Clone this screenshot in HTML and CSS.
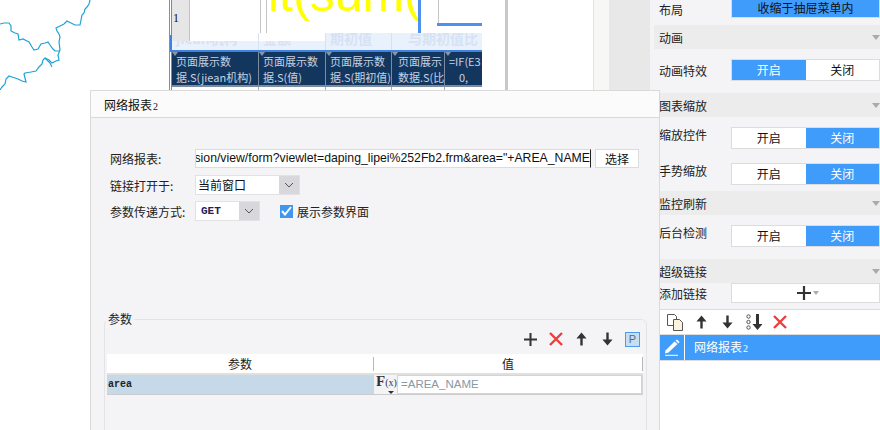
FILE: index.html
```html
<!DOCTYPE html>
<html lang="en">
<head>
    <meta charset="UTF-8">
    <title>网络报表2</title>
    <link rel="stylesheet" href="styles.css">
</head>
<body>
    <svg class="defs" width="0" height="0">
        <symbol id="i-plus" viewBox="0 0 14 14"><path d="M7 0v14M0 7h14" stroke="#333" stroke-width="2.2" fill="none"/></symbol>
        <symbol id="i-del" viewBox="0 0 14 14"><path d="M1 1l12 12M13 1L1 13" stroke="#ee3d3d" stroke-width="2.4" fill="none"/></symbol>
        <symbol id="i-up" viewBox="0 0 12 14"><path d="M6 0l5.500 6.500H7.300V14H4.700V6.500H.5z" fill="#333"/></symbol>
        <symbol id="i-down" viewBox="0 0 12 14"><path d="M6 14L.5 7.500h4.200V0h2.600v7.500h4.200z" fill="#333"/></symbol>
    </svg>

    <div class="stage">
        <!-- map behind the sheet -->
        <div class="map">
            <svg width="169" height="90" viewBox="0 0 169 90">
                <polyline class="river" points="90,0 89,4 87,7 85,9 84,13 82,15 81,20 80,25 75,25 71,23 67,21 64,24 60,26 56,28 57,31 59,34 60,37 59,42 60,50 58,55 59,60 56,61 52,63 49,60 45,58 43,60 42,64 39,67 36,71 31,72 25,73 24,74 25,78 26,82 22,81 18,79 12,77 9,76 6,79 5,84 2,87 0,90"/>
                <polyline class="river" points="0,24 4,23 9,23 11,26 11,31 15,33 18,34 19,40 23,39 27,41 29,42 32,47 34,50 38,49 41,44 45,43 48,42 50,45 53,49 55,51 59,51"/>
                <polyline class="river" points="45,58 48,61 50,63 52,67"/>
            </svg>
        </div>

        <div class="sheet">
            <div class="sheet-top">
                <div class="row-head">1</div>
                <div class="top-a"></div>
                <div class="top-b"><span class="formula">it(sum(</span></div>
                <div class="top-c"></div>
            </div>
            <div class="strip">
                <div class="strip-cell c1 masked">jiean机构</div>
                <div class="strip-cell c2 masked">金额</div>
                <div class="strip-cell c3">期初值</div>
                <div class="strip-cell c4">与期初值比</div>
            </div>
            <div class="data-row">
                <div class="data-cell c1">页面展示数<br>据.S(jiean机构)</div>
                <div class="data-cell c2">页面展示数<br>据.S(值)</div>
                <div class="data-cell c3">页面展示数<br>据.S(期初值)</div>
                <div class="data-cell c4">页面展示<br>数据.S(比</div>
                <div class="data-cell c5">=IF(E3<br><span class="zero">0,</span></div>
            </div>
            <div class="tail">
                <div class="tail-cell c1"></div>
                <div class="tail-cell c2"></div>
                <div class="tail-cell c3"></div>
                <div class="tail-cell c4b"></div>
            </div>
        </div>
        <div class="gutter"></div>
        <div class="strip-light"></div>
        <div class="strip-grey"></div>

        <div class="panel">
            <div class="prop prop-first">
                <span class="prop-label">布局</span>
                <div class="toggle"><span class="on wide">收缩于抽屉菜单内</span></div>
            </div>
            <div class="group first-group">动画<i class="caret"></i></div>
            <div class="prop">
                <span class="prop-label">动画特效</span>
                <div class="toggle"><span class="on">开启</span><span>关闭</span></div>
            </div>
            <div class="group">图表缩放<i class="caret"></i></div>
            <div class="prop raised">
                <span class="prop-label">缩放控件</span>
                <div class="toggle"><span>开启</span><span class="on">关闭</span></div>
            </div>
            <div class="prop raised gap-small">
                <span class="prop-label">手势缩放</span>
                <div class="toggle"><span>开启</span><span class="on">关闭</span></div>
            </div>
            <div class="group tight">监控刷新<i class="caret"></i></div>
            <div class="prop raised">
                <span class="prop-label">后台检测</span>
                <div class="toggle"><span>开启</span><span class="on">关闭</span></div>
            </div>
            <div class="group">超级链接<i class="caret"></i></div>
            <div class="prop prop-add">
                <span class="prop-label">添加链接</span>
                <div class="add-btn">
                    <svg width="14" height="14"><use href="#i-plus"/></svg>
                    <i class="caret small"></i>
                </div>
            </div>
            <div class="links">
                <div class="links-bar">
                    <svg width="17" height="17" viewBox="0 0 17 17">
                        <path d="M.5.5h7l2 2v9H.5z" fill="#fff" stroke="#555"/>
                        <path d="M6.5 5.500h6l3 3v8h-9z" fill="#fbf3dc" stroke="#555"/>
                    </svg>
                    <svg class="b-up" width="11" height="14"><use href="#i-up"/></svg>
                    <svg class="b-down" width="11" height="14"><use href="#i-down"/></svg>
                    <svg class="b-bottom" width="17" height="16" viewBox="0 0 17 16">
                        <circle cx="2.500" cy="2.500" r="1.700" fill="none" stroke="#555"/>
                        <circle cx="2.500" cy="8" r="1.700" fill="none" stroke="#555"/>
                        <circle cx="2.500" cy="13.500" r="1.700" fill="none" stroke="#555"/>
                        <path d="M11.500 16L6.500 10h3.500V0h3v10h3.500z" fill="#333"/>
                    </svg>
                    <svg class="b-del" width="14" height="14"><use href="#i-del"/></svg>
                </div>
                <div class="link-item">
                    <span class="link-icon">
                        <svg width="16" height="17" viewBox="0 0 16 17">
                            <path d="M1.500 11.500L10.500 2.500l3 2.500-9 8.500-3.500 1z" fill="#fff"/>
                            <path d="M11.500 1.500l1.500-1 2.500 2.500-1 1.500z" fill="#fff"/>
                            <path d="M1 16.300h13" stroke="#fff"/>
                        </svg>
                    </span>
                    <span class="link-name">网络报表<small>2</small></span>
                </div>
            </div>
        </div>
    </div>

    <!-- dialog -->
    <div class="dialog">
        <div class="dialog-title">网络报表<small>2</small></div>
        <div class="dialog-body">
            <div class="form-row row-url">
                <label>网络报表:</label>
                <div class="url-input"><span class="url-text">sion/view/form?viewlet=daping_lipei%252Fb2.frm&amp;area="+AREA_NAME</span></div>
                <div class="pick-btn">选择</div>
            </div>
            <div class="form-row row-target">
                <label>链接打开于:</label>
                <div class="select select-target">
                    <span class="select-text">当前窗口</span>
                    <span class="select-arrow"><svg width="10" height="6"><path d="M1 1l4 4 4-4" stroke="#555" fill="none"/></svg></span>
                </div>
            </div>
            <div class="form-row row-method">
                <label>参数传递方式:</label>
                <div class="select select-method">
                    <span class="select-text mono">GET</span>
                    <span class="select-arrow"><svg width="10" height="6"><path d="M1 1l4 4 4-4" stroke="#555" fill="none"/></svg></span>
                </div>
                <span class="check"><svg width="11" height="10"><path d="M1 5l3 3.500L10 1" stroke="#fff" stroke-width="2" fill="none"/></svg></span>
                <span class="check-label">展示参数界面</span>
            </div>

            <div class="params">
                <span class="legend">参数</span>
                <div class="params-bar">
                    <svg class="p-plus" width="13" height="13"><use href="#i-plus"/></svg>
                    <svg class="p-del" width="14" height="14"><use href="#i-del"/></svg>
                    <svg class="p-up" width="11" height="14"><use href="#i-up"/></svg>
                    <svg class="p-down" width="11" height="14"><use href="#i-down"/></svg>
                    <span class="p-btn">P</span>
                </div>
                <div class="params-head">
                    <span class="head-a">参数</span>
                    <span class="head-b">值</span>
                </div>
                <div class="params-row">
                    <div class="param-name">area</div>
                    <div class="param-fx">F<span class="fx-x">(x)</span><i class="fx-caret"></i></div>
                    <div class="param-value">=AREA_NAME</div>
                </div>
            </div>
        </div>
    </div>
</body>
</html>
```

FILE: styles.css
```css
* {
    box-sizing: border-box;
}

html, body {
    margin: 0;
    height: 430px;
    overflow: hidden;
}

body {
    position: relative;
    width: 880px;
    background-color: #ffffff;
    font-family: "Noto Sans CJK SC", "Liberation Sans", sans-serif;
    font-size: 12px;
    color: #222222;
}

.defs {
    position: absolute;
}

.stage {
    display: flex;
    height: 430px;
}

.map {
    width: 169px;
    flex: none;
}

.map svg {
    display: block;
}

.river {
    fill: none;
    stroke: #1ea3d2;
    stroke-width: 1.2;
}

/* Sheet */
.sheet {
    width: 336px;
    flex: none;
    height: 90px;
    border-left: 1px solid #5c96e0;
    padding-left: 2px;
    background-color: #ffffff;
    background-image: linear-gradient(#4d90e6, #4d90e6);
    background-size: 1px 100%;
    background-position: 1px 0;
    background-repeat: no-repeat;
}

.sheet-top {
    display: flex;
    height: 33px;
    width: 310px;
}

.row-head {
    width: 18px;
    flex: none;
    height: 41px;
    padding: 11px 0 0 1px;
    background-color: #e6e6e6;
    border-right: 1px solid #c4c4c4;
    font-family: "Liberation Serif", serif;
    font-size: 12px;
    color: #111111;
    z-index: 1;
}

.top-a {
    width: 71px;
    flex: none;
    border-right: 1px solid #c4c4c4;
}

.top-b {
    position: relative;
    width: 155px;
    flex: none;
    margin-left: 5px;
    border-left: 1px solid #c4c4c4;
    border-right: 3px solid #4d90f0;
    overflow: hidden;
}

.formula {
    position: absolute;
    left: 1px;
    top: -31px;
    font-family: "Liberation Sans", sans-serif;
    font-size: 50px;
    line-height: 50px;
    color: #ffff00;
    white-space: nowrap;
}

.top-c {
    position: relative;
    flex: none;
    width: 45px;
    margin-left: 16px;
}

.top-c::before {
    content: "";
    position: absolute;
    left: 1px;
    top: 0;
    width: 1px;
    height: 23px;
    background-color: #c4c4c4;
}

.top-c::after {
    content: "";
    position: absolute;
    left: 0;
    right: 0;
    top: 23px;
    height: 3px;
    background-color: #4d90f0;
}

.strip {
    display: flex;
    height: 17px;
    width: 310px;
    background-color: #e9f2fc;
    box-shadow: -2px 2px 0 #3f82e0, 0 2px 0 #3f82e0;
}

.strip-cell {
    position: relative;
    flex: none;
    height: 17px;
    padding-left: 4px;
    border-right: 1px solid #d6e2f0;
    font-size: 14px;
    font-weight: 700;
    line-height: 10px;
    color: #d6e2f4;
    overflow: hidden;
    white-space: nowrap;
}

.strip-cell.c4 {
    padding-left: 16px;
}

.masked::before {
    content: "";
    position: absolute;
    left: 0;
    right: 0;
    top: 0;
    height: 8px;
    background-color: #ffffff;
}

.c1 { width: 87px; }
.c2 { width: 67px; }
.c3 { width: 66px; }
.c4 { width: 90px; border-right: 0; }
.c4b { width: 53px; }

.data-row {
    display: flex;
    width: 310px;
    height: 35px;
    margin-top: 2px;
    background-color: #13365f;
    border-bottom: 2px solid #7d8ba0;
}

.data-cell {
    position: relative;
    flex: none;
    height: 33px;
    padding: 1px 0 0 4px;
    border-right: 1px solid #7d8ba0;
    font-size: 11px;
    line-height: 16px;
    color: #c6d2e0;
    overflow: hidden;
    white-space: nowrap;
}

.data-cell::before {
    content: "";
    position: absolute;
    left: 0;
    top: 0;
    border-left: 3px solid transparent;
    border-right: 3px solid transparent;
    border-top: 4px solid #8a96a5;
}

.data-cell.c4 {
    width: 53px;
    padding-left: 6px;
    border-right: 1px solid #7d8ba0;
}

.data-cell.c5 {
    width: 37px;
    border-right: 0;
}

.zero {
    margin-left: 10px;
}

.tail {
    display: flex;
    height: 3px;
}

.tail-cell {
    flex: none;
    border-right: 1px solid #a4acb8;
}

.gutter {
    width: 3px;
    flex: none;
    background-color: #c8c8c8;
}

.strip-light {
    width: 86px;
    flex: none;
    background-color: #ffffff;
    border-right: 1px solid #e4e4dc;
}

.strip-grey {
    width: 56px;
    flex: none;
    background-image: linear-gradient(to right, #f7f7f5 15px, #e8e8e8 15px);
}

/* Right panel */
.panel {
    width: 230px;
    flex: none;
    background-color: #f4f4f6;
}

.prop {
    display: flex;
    align-items: center;
    height: 22px;
    margin-top: 10px;
    padding-left: 9px;
}

.prop-first {
    height: 18px;
    margin-top: 0;
}

.prop-label {
    width: 72px;
    flex: none;
    font-size: 12px;
}

.raised .prop-label {
    margin-bottom: 7px;
}

.gap-small {
    margin-top: 14px;
}

.toggle {
    display: flex;
    width: 149px;
    height: 100%;
    border: 1px solid #dcdcdc;
    background-color: #ffffff;
    font-size: 12px;
}

.toggle span {
    flex: 1;
    text-align: center;
    line-height: 20px;
    color: #111111;
}

.toggle .on {
    background-color: #409cfa;
    color: #ffffff;
}

.toggle .wide {
    color: #111111;
    line-height: 16px;
}

.prop-first .toggle {
    border-top: 0;
}

.group {
    position: relative;
    height: 24px;
    margin-top: 12px;
    margin-left: 4px;
    padding-left: 5px;
    background-color: #ececec;
    font-size: 12px;
    line-height: 25px;
}

.first-group {
    margin-top: 7px;
}

.tight {
    margin-top: 6px;
}

.caret {
    position: absolute;
    right: 0;
    top: 10px;
    border-left: 4px solid transparent;
    border-right: 4px solid transparent;
    border-top: 5px solid #aaaaaa;
}

.caret.small {
    position: static;
    margin-left: 2px;
    border-left-width: 3px;
    border-right-width: 3px;
    border-top-width: 4px;
}

.prop-add {
    height: 20px;
    margin-top: 0;
}

.add-btn {
    display: flex;
    align-items: center;
    justify-content: center;
    width: 149px;
    height: 100%;
    padding-left: 5px;
    background-color: #ffffff;
    border: 1px solid #dcdcdc;
}

.links {
    margin: 6px 0 0 10px;
    height: 121px;
    background-color: #ffffff;
    border-top: 1px solid #dcdcdc;
}

.links-bar {
    display: flex;
    align-items: center;
    height: 25px;
    padding-left: 7px;
    border-bottom: 1px solid #dcdcdc;
}

.b-up { margin-left: 12px; }
.b-down { margin-left: 15px; }
.b-bottom { margin-left: 13px; }
.b-del { margin-left: 10px; }

.link-item {
    display: flex;
    height: 26px;
    background-color: #409cfa;
    border-bottom: 1px solid #dcdcdc;
    color: #ffffff;
}

.link-icon {
    display: flex;
    align-items: center;
    justify-content: center;
    width: 25px;
    border-right: 1px solid #ffffff;
}

.link-name {
    padding-left: 9px;
    line-height: 24px;
}

small {
    font-family: "Liberation Serif", serif;
    font-size: 10px;
    margin-left: 1px;
}

/* Dialog */
.dialog {
    position: absolute;
    left: 90px;
    top: 90px;
    width: 570px;
    height: 340px;
    background-color: #f4f4f6;
    border: 1px solid #dadada;
    border-bottom: 0;
}

.dialog-title {
    height: 27px;
    padding-left: 13px;
    background-color: #fbfbfb;
    border-bottom: 1px solid #dadada;
    line-height: 27px;
    color: #111111;
}

.dialog-body {
    padding: 31px 0 0 19px;
}

.form-row {
    display: flex;
    align-items: center;
}

.form-row label {
    width: 85px;
    flex: none;
    color: #222222;
}

.row-url {
    height: 19px;
}

.url-input {
    display: flex;
    justify-content: flex-end;
    width: 396px;
    height: 19px;
    background-color: #ffffff;
    border: 1px solid #dcdcdc;
    border-right: 1px solid #222222;
    overflow: hidden;
    white-space: nowrap;
    font-family: "Liberation Sans", sans-serif;
    font-size: 12.25px;
    line-height: 17px;
    color: #111111;
}

.url-text {
    flex: none;
}

.pick-btn {
    width: 44px;
    height: 19px;
    margin-left: 4px;
    background-color: #ffffff;
    border: 1px solid #dcdcdc;
    line-height: 17px;
    text-align: center;
    color: #111111;
}

.select {
    display: flex;
    height: 20px;
    background-color: #ffffff;
    border: 1px solid #e2e2e4;
}

.select-target {
    width: 105px;
}

.select-method {
    width: 65px;
}

.select-text {
    flex: 1;
    padding-left: 2px;
    line-height: 18px;
    color: #111111;
}

.select-text.mono {
    padding-left: 5px;
    font-family: "Liberation Mono", monospace;
    font-size: 11px;
    font-weight: 700;
    color: #222255;
}

.select-arrow {
    display: flex;
    align-items: center;
    justify-content: center;
    width: 20px;
    background-color: #d8d8dc;
}

.row-target {
    height: 20px;
    margin-top: 7px;
}

.row-method {
    height: 20px;
    margin-top: 6px;
}

.check {
    display: flex;
    align-items: center;
    justify-content: center;
    width: 13px;
    height: 13px;
    margin-left: 20px;
    background-color: #3f96f0;
}

.check-label {
    margin-left: 4px;
}

/* Parameter box */
.params {
    position: relative;
    width: 543px;
    height: 120px;
    margin: 98px 0 0 -6px;
    border: 1px solid #e4e4e6;
    border-radius: 6px 6px 0 0;
    padding: 7px 3px 0 2px;
}

.legend {
    position: absolute;
    left: 1px;
    top: -10px;
    padding: 0 2px;
    background-color: #f4f4f6;
    line-height: 18px;
    color: #222222;
}

.params-bar {
    display: flex;
    align-items: center;
    justify-content: flex-end;
    height: 24px;
    margin-bottom: 3px;
    padding-right: 3px;
}

.p-del { margin-left: 12px; }
.p-up { margin-left: 13px; }
.p-down { margin-left: 15px; }

.p-btn {
    width: 15px;
    height: 15px;
    margin-left: 12px;
    background-color: #c6def2;
    border: 1px solid #4d9bf0;
    font-family: "Liberation Sans", sans-serif;
    font-size: 11px;
    line-height: 13px;
    text-align: center;
    color: #5a6a7a;
}

.params-head {
    display: flex;
    width: 536px;
    height: 21px;
    background-color: #ffffff;
    border-bottom: 2px solid #e0e0e0;
    text-align: center;
}

.head-a {
    width: 267px;
    height: 14px;
    margin-top: 3px;
    border-right: 1px solid #b8b8b8;
    line-height: 14px;
}

.head-b {
    width: 269px;
    height: 14px;
    margin-top: 3px;
    border-right: 1px solid #b8b8b8;
    line-height: 14px;
}

.params-row {
    display: flex;
    width: 536px;
    height: 20px;
    border-bottom: 1px solid #cccccc;
    background-color: #d4d4d4;
}

.param-name {
    width: 267px;
    padding-left: 1px;
    background-color: #c6d9e8;
    font-family: "Liberation Mono", monospace;
    font-size: 10px;
    font-weight: 700;
    line-height: 20px;
    color: #222222;
}

.param-fx {
    position: relative;
    width: 23px;
    padding-left: 2px;
    background-color: #f4f4f6;
    font-family: "Liberation Serif", serif;
    font-size: 15px;
    font-weight: 700;
    line-height: 13px;
    color: #333333;
}

.fx-x {
    font-size: 10px;
    font-weight: 400;
}

.fx-caret {
    position: absolute;
    right: 3px;
    bottom: 0;
    border-left: 3px solid transparent;
    border-right: 3px solid transparent;
    border-top: 3px solid #333333;
}

.param-value {
    flex: 1;
    margin: 1px 2px 1px 1px;
    padding-left: 3px;
    background-color: #ffffff;
    font-family: "Liberation Sans", sans-serif;
    font-size: 11.5px;
    line-height: 17px;
    color: #8a97a5;
}
```
